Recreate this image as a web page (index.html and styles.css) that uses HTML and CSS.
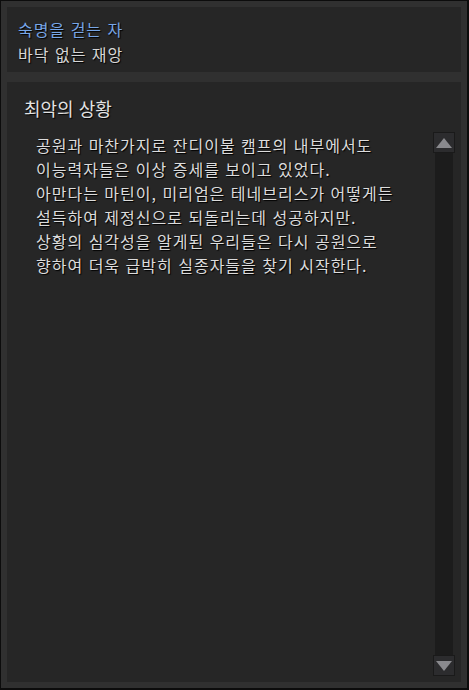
FILE: index.html
```html
<!DOCTYPE html>
<html lang="ko">
<head>
<meta charset="utf-8">
<link rel="stylesheet" href="styles.css">
</head>
<body>
<div class="frame">
  <section class="header">
    <div class="title">숙명을 걷는 자</div>
    <div class="subtitle">바닥 없는 재앙</div>
  </section>
  <section class="content">
    <h2 class="heading">최악의 상황</h2>
    <div class="body">
      <div class="text">
        <p>공원과 마찬가지로 잔디이불 캠프의 내부에서도</p>
        <p>이능력자들은 이상 증세를 보이고 있었다.</p>
        <p>아만다는 마틴이, 미리엄은 테네브리스가 어떻게든</p>
        <p>설득하여 제정신으로 되돌리는데 성공하지만.</p>
        <p>상황의 심각성을 알게된 우리들은 다시 공원으로</p>
        <p>향하여 더욱 급박히 실종자들을 찾기 시작한다.</p>
      </div>
      <div class="scrollbar">
        <div class="btn"><svg width="16" height="10" viewBox="0 0 16 10"><polygon points="8,0 16,10 0,10" fill="#8a8a8e"/></svg></div>
        <div class="track"></div>
        <div class="btn"><svg width="16" height="10" viewBox="0 0 16 10"><polygon points="0,0 16,0 8,10" fill="#8a8a8e"/></svg></div>
      </div>
    </div>
  </section>
</div>
</body>
</html>
```
FILE: styles.css
```css
html, body {
  margin: 0;
  padding: 0;
  background: #000;
}
.frame {
  box-sizing: border-box;
  width: 469px;
  height: 690px;
  background: #303030;
  border: 1px solid #0c0c0c;
  border-right-width: 2px;
  border-bottom-width: 2px;
  padding: 6px 6px 6px 6px;
  display: flex;
  flex-direction: column;
  gap: 10px;
  font-family: "Noto Sans CJK KR", "Noto Sans", sans-serif;
}
.header {
  background: #262626;
  height: 65px;
  box-sizing: border-box;
  padding: 11px 11px 0;
}
.title {
  color: #78a6e6;
  font-size: 16px;
  letter-spacing: 1px;
  line-height: 22px;
  height: 25px;
  text-shadow: 1px 1px 1px #000;
}
.subtitle {
  color: #d6d6d6;
  font-size: 16px;
  letter-spacing: 1px;
  line-height: 22px;
  text-shadow: 1px 1px 1px #000;
}
.content {
  flex: 1;
  background: #262626;
  display: flex;
  flex-direction: column;
  padding: 14px 6px 6px 17px;
}
.heading {
  margin: 0;
  font-size: 18px;
  font-weight: normal;
  color: #e2e2e2;
  line-height: 24px;
  height: 36px;
  text-shadow: 1px 1px 1px #000;
}
.body {
  flex: 1;
  display: flex;
}
.text {
  flex: 1;
  padding: 1px 0 0 12px;
}
.text p {
  margin: 0;
  font-size: 16px;
  line-height: 24px;
  letter-spacing: 1px;
  color: #dcdcdc;
  text-shadow: 1px 1px 1px #000;
  white-space: nowrap;
}
.scrollbar {
  width: 22px;
  display: flex;
  flex-direction: column;
  align-items: center;
}
.btn {
  width: 22px;
  height: 21px;
  box-sizing: border-box;
  background: #2c2c2e;
  border: 1px solid #1a1a1a;
  display: flex;
  align-items: center;
  justify-content: center;
}
.track {
  flex: 1;
  width: 18px;
  background: #1c1c1c;
}
```
